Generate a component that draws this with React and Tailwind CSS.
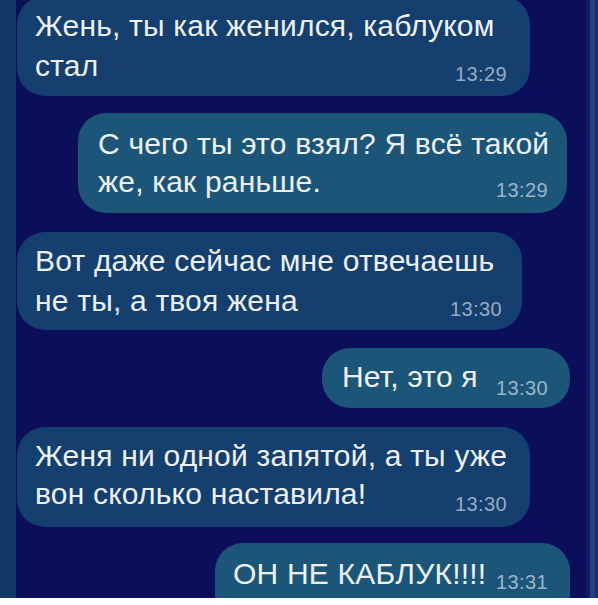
const messages = [
  {
    out: false,
    lines: ['Жень, ты как женился, каблуком', 'стал'],
    time: '13:29',
    box: 'w-[513px] h-[100px] -mt-[4px] ml-[1px] pt-[10px] pl-[18px] pr-[23px]',
    leading: 'leading-[40px]',
  },
  {
    out: true,
    lines: ['С чего ты это взял? Я всё такой', 'же, как раньше.'],
    time: '13:29',
    box: 'w-[489px] h-[100px] mt-[17px] mr-[19px] pt-[12px] pl-[20px] pr-[19px]',
    leading: 'leading-[38px]',
  },
  {
    out: false,
    lines: ['Вот даже сейчас мне отвечаешь', 'не ты, а твоя жена'],
    time: '13:30',
    box: 'w-[505px] h-[98px] mt-[19px] ml-[1px] pt-[9px] pl-[18px] pr-[20px]',
    leading: 'leading-[40px]',
  },
  {
    out: true,
    lines: ['Нет, это я'],
    time: '13:30',
    box: 'w-[248px] h-[60px] mt-[18px] mr-[16px] pt-[9px] pl-[20px] pr-[22px]',
    leading: 'leading-[40px]',
    drop: 'translate-y-[8px]',
  },
  {
    out: false,
    lines: ['Женя ни одной запятой, а ты уже', 'вон сколько наставила!'],
    time: '13:30',
    box: 'w-[513px] h-[100px] mt-[19px] ml-[1px] pt-[10px] pl-[18px] pr-[23px]',
    leading: 'leading-[38px]',
    drop: 'translate-y-[7px]',
  },
  {
    out: true,
    lines: ['ОН НЕ КАБЛУК!!!!'],
    time: '13:31',
    box: 'w-[355px] h-[80px] mt-[16px] mr-[16px] pt-[11px] pl-[18px] pr-[22px]',
    leading: 'leading-[40px]',
  },
]

const Bubble = ({ msg }) => {
  const last = msg.lines.length - 1
  return (
    <div
      className={`shrink-0 rounded-[28px] ${msg.box} ${
        msg.out ? 'self-end bg-[#1b5679]' : 'self-start bg-[#143f6e]'
      }`}
    >
      {msg.lines.map((line, i) =>
        i < last ? (
          <div key={i} className={`whitespace-nowrap text-[30px] tracking-[0.2px] ${msg.leading}`}>
            {line}
          </div>
        ) : (
          <div key={i} className="flex items-baseline justify-between">
            <span className={`whitespace-nowrap text-[30px] tracking-[0.2px] ${msg.leading}`}>
              {line}
            </span>
            <span
              className={`text-[20px] tracking-[0.4px] leading-none ${msg.drop || 'translate-y-[5px]'} ${
                msg.out ? 'text-[#9bb4c8]' : 'text-[#98aac2]'
              }`}
            >
              {msg.time}
            </span>
          </div>
        )
      )}
    </div>
  )
}

export default function App() {
  return (
    <div
      className="w-[598px] h-[605px] flex flex-col overflow-hidden bg-white text-[#edf1f6]"
      style={{ fontFamily: '"Liberation Sans", Arial, sans-serif' }}
    >
      <div className="flex flex-1 min-h-0">
        <div className="w-[16px] bg-[#12386a]" />
        <div className="flex-1 flex flex-col bg-[#0b0f5a] overflow-hidden">
          {messages.map((m, i) => (
            <Bubble key={i} msg={m} />
          ))}
        </div>
        <div className="flex w-[12px]">
          <div className="w-[4px] bg-[#0e1c62]" />
          <div className="w-[5px] bg-[#22437c]" />
          <div className="w-[3px] bg-[#173170]" />
        </div>
      </div>
      <div className="h-[7px] bg-white" />
    </div>
  )
}
